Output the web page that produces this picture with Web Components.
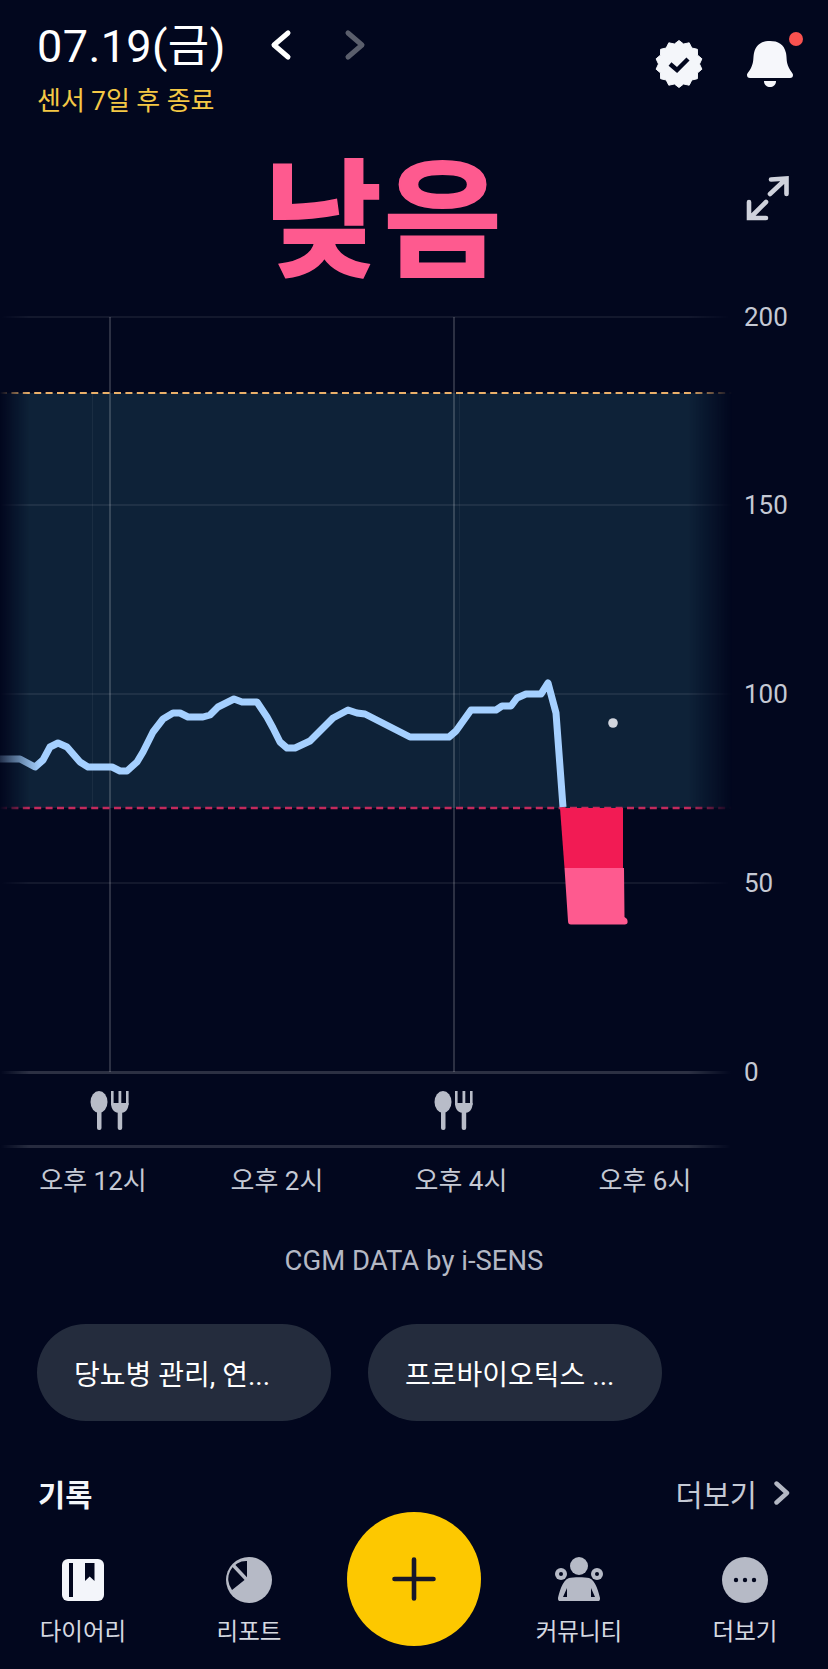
<!DOCTYPE html>
<html lang="ko">
<head>
<meta charset="utf-8">
<title>CGM</title>
<style>
  html, body { margin: 0; padding: 0; background: #02071e; }
  body { width: 828px; height: 1669px; overflow: hidden; font-family: Roboto, "Noto Sans CJK KR", sans-serif; color: #fff; }
</style>
</head>
<body>
<glucose-page>
  <glucose-header date="07.19(금)" note="센서 7일 후 종료"></glucose-header>
  <status-banner label="낮음"></status-banner>
  <glucose-chart></glucose-chart>
  <time-axis labels="오후 12시,오후 2시,오후 4시,오후 6시"></time-axis>
  <source-note>CGM DATA by i-SENS</source-note>
  <chip-row>
    <topic-chip>당뇨병 관리, 연...</topic-chip>
    <topic-chip>프로바이오틱스 ...</topic-chip>
  </chip-row>
  <record-head></record-head>
  <bottom-nav></bottom-nav>
</glucose-page>

<script>
class GlucosePage extends HTMLElement {
  constructor() {
    super();
    this.attachShadow({ mode: "open" });
    this.shadowRoot.innerHTML = `
      <style>:host { display: block; width: 828px; height: 1669px; }</style>
      <slot></slot>`;
  }
}

class GlucoseHeader extends HTMLElement {
  constructor() {
    super();
    this.attachShadow({ mode: "open" });
  }

  connectedCallback() {
    // badge outline has 14 little bumps
    let pts = [];
    for (let i = 0; i < 28; i++) {
      const r = i % 2 ? 20.5 : 23.5;
      const a = (Math.PI * i) / 14 - Math.PI / 2;
      pts.push((24 + r * Math.cos(a)).toFixed(1) + "," + (24 + r * Math.sin(a)).toFixed(1));
    }
    this.shadowRoot.innerHTML = `
      <style>
        :host { display: flex; justify-content: space-between; height: 138px; padding: 0 22px 0 37px; }
        .left { display: flex; flex-direction: column; }
        .top { display: flex; align-items: center; height: 80px; margin-top: 8px; }
        .date { font-size: 45px; line-height: 80px; width: 232px; color: #fff; margin-top: -2px; letter-spacing: 0.4px; }
        .nav { display: flex; gap: 50px; margin-top: -6px; }
        .note { font-size: 26px; line-height: 36px; margin-top: -5px; color: #f4c845; }
        .actions { display: flex; gap: 41px; padding-top: 40px; height: 48px; }
        svg { display: block; }
      </style>
      <div class="left">
        <div class="top">
          <span class="date">${this.getAttribute("date")}</span>
          <div class="nav">
            <svg width="24" height="32" viewBox="0 0 24 32"><path d="M19 4 L5 16 L19 28" fill="none" stroke="#fff" stroke-width="5" stroke-linecap="round" stroke-linejoin="round"/></svg>
            <svg width="24" height="32" viewBox="0 0 24 32"><path d="M5 4 L19 16 L5 28" fill="none" stroke="#5a5e6c" stroke-width="5" stroke-linecap="round" stroke-linejoin="round"/></svg>
          </div>
        </div>
        <div class="note">${this.getAttribute("note")}</div>
      </div>
      <div class="actions">
        <svg width="48" height="48" viewBox="0 0 48 48">
          <polygon points="${pts.join(" ")}" fill="#f4f6fa" stroke="#f4f6fa" stroke-width="1" stroke-linejoin="round"/>
          <path d="M15 24 L22 30 L33 19" fill="none" stroke="#02071e" stroke-width="4.4"/>
        </svg>
        <svg width="62" height="58" viewBox="0 0 62 58" style="margin-top:-8px">
          <path d="M3 43 C3 41 5 40 7 36 C10 30 9 26 10 21 C12 12 18 9 26 9 C34 9 40 12 42 21 C43 26 42 30 45 36 C47 40 49 41 49 43 C49 45 48 46 46 46 L6 46 C4 46 3 45 3 43 Z" fill="#f6f7fb"/>
          <path d="M20 49 L32 49 C32 53 29 55 26 55 C23 55 20 53 20 49 Z" fill="#f6f7fb"/>
          <circle cx="52" cy="7" r="7" fill="#f9524f"/>
        </svg>
      </div>`;
  }
}

class StatusBanner extends HTMLElement {
  constructor() {
    super();
    this.attachShadow({ mode: "open" });
  }

  connectedCallback() {
    this.shadowRoot.innerHTML = `
      <style>
        :host { display: flex; align-items: flex-start; justify-content: space-between; height: 172px; padding: 0 37px 0 264px; }
        .label { font-family: "Noto Sans CJK KR", sans-serif; font-size: 128px; font-weight: 700; -webkit-text-stroke: 2px #fe5a8f; line-height: 150px; letter-spacing: 2px; color: #fe5a8f; margin-top: -1px; }
        svg { display: block; margin-top: 37px; }
      </style>
      <span class="label">${this.getAttribute("label")}</span>
      <svg width="46" height="46" viewBox="0 0 46 46">
        <path d="M25 19 L41 4 M26 4.5 L41.5 3.5 L41.5 19 M6 42 L21 27 M4 27 L4 43 L21 43" fill="none" stroke="#cfd2dc" stroke-width="4.6" stroke-linecap="round" stroke-linejoin="miter"/>
      </svg>`;
  }
}

// the chart is a free canvas, coordinates below are in page pixels (host starts at y=310)
class GlucoseChart extends HTMLElement {
  constructor() {
    super();
    this.attachShadow({ mode: "open" });
  }

  connectedCallback() {
    const line = "0,759 20,759 35,767 43,760 50,747 58,743 67,747 80,762 88,767 112,767 120,771 127,771 137,762 143,752 153,732 163,719 173,713 180,713 188,717 203,717 210,715 218,707 234,699 242,702 257,702 267,717 273,728 280,742 287,748 295,748 310,741 333,718 348,710 357,713 365,714 410,737 449,737 456,731 471,710 496,710 502,706 511,706 517,698 526,694 541,694 548,683 552,698 556,713 563,807";
    const ticks = [[200, 317], [150, 505], [100, 694], [50, 883], [0, 1072]];
    const meal = `<g fill="#b8bcc8">
        <ellipse cx="99" cy="1102" rx="8.5" ry="11"/>
        <rect x="97" y="1108" width="4.5" height="22" rx="2"/>
        <rect x="111" y="1091" width="2.6" height="14"/><rect x="118.5" y="1091" width="2.8" height="16"/><rect x="126" y="1091" width="2.6" height="14"/>
        <path d="M111 1103 L128.6 1103 C128.6 1110 125 1113 120 1113 C115 1113 111 1110 111 1103 Z"/>
        <rect x="117.7" y="1110" width="4.5" height="20" rx="2"/>
      </g>`;
    this.shadowRoot.innerHTML = `
      <style>
        :host { display: block; height: 850px; }
        svg { display: block; overflow: visible; }
        text { font-family: Roboto, sans-serif; font-size: 26px; fill: #c5c9d4; }
      </style>
      <svg width="828" height="850" viewBox="0 310 828 850">
        <defs>
          <linearGradient id="fade" x1="0" y1="0" x2="732" y2="0" gradientUnits="userSpaceOnUse">
            <stop offset="0" stop-color="#fff" stop-opacity="0"/>
            <stop offset=".04" stop-color="#fff"/>
            <stop offset=".94" stop-color="#fff"/>
            <stop offset="1" stop-color="#fff" stop-opacity="0"/>
          </linearGradient>
          <mask id="edge" maskUnits="userSpaceOnUse" x="0" y="310" width="828" height="850">
            <rect x="0" y="310" width="732" height="850" fill="url(#fade)"/>
          </mask>
          <linearGradient id="lineFade" x1="0" y1="0" x2="40" y2="0" gradientUnits="userSpaceOnUse">
            <stop offset="0" stop-color="#a5d0ff" stop-opacity=".2"/>
            <stop offset="1" stop-color="#a5d0ff"/>
          </linearGradient>
        </defs>
        <g mask="url(#edge)">
          <rect x="0" y="393" width="732" height="415" fill="#0e2238"/>
          ${ticks.map((t) => `<rect x="0" y="${t[1] - 1}" width="732" height="${t[0] === 0 ? 3 : 2}" fill="#fff" fill-opacity="${t[0] === 0 ? 0.17 : 0.07}"/>`).join("")}
          <rect x="0" y="1145" width="732" height="3" fill="#fff" fill-opacity=".15"/>
          <rect x="92" y="393" width="1" height="415" fill="#fff" fill-opacity=".05"/>
          <rect x="459" y="393" width="1" height="415" fill="#fff" fill-opacity=".05"/>
          <rect x="109" y="317" width="2" height="755" fill="#fff" fill-opacity=".17"/>
          <rect x="453" y="317" width="2" height="755" fill="#fff" fill-opacity=".17"/>
          <line x1="0" y1="393" x2="732" y2="393" stroke="#eab06a" stroke-width="2" stroke-dasharray="7 4.4"/>
          <line x1="0" y1="808" x2="732" y2="808" stroke="#c22a5c" stroke-width="2.4" stroke-dasharray="7 4.4"/>
        </g>
        <path d="M560 808 L623 808 L623 868 L564.5 868 Z" fill="#f21b54"/>
        <path d="M564.5 868 L624 868 L624.5 917 L627 919 Q629 924 625 924.5 L571 924.5 Q568 924.5 568 921 Z" fill="#fe5a8f"/>
        <polyline points="${line}" fill="none" stroke="url(#lineFade)" stroke-width="7" stroke-linejoin="round" stroke-linecap="butt"/>
        <circle cx="613" cy="723" r="4.8" fill="#d2d6de"/>
        ${ticks.map((t) => `<text x="744" y="${t[1] + 9}">${t[0]}</text>`).join("")}
        ${meal}
        <g transform="translate(344 0)">${meal}</g>
      </svg>`;
  }
}

class TimeAxis extends HTMLElement {
  constructor() {
    super();
    this.attachShadow({ mode: "open" });
  }

  connectedCallback() {
    const labels = this.getAttribute("labels").split(",");
    this.shadowRoot.innerHTML = `
      <style>
        :host { display: grid; grid-template-columns: repeat(4, 184px); padding: 3px 0 0 1px; height: 57px; }
        span { text-align: center; font-size: 26px; line-height: 36px; color: #c5c9d4; }
      </style>
      ${labels.map((l) => `<span>${l}</span>`).join("")}`;
  }
}

class SourceNote extends HTMLElement {
  constructor() {
    super();
    this.attachShadow({ mode: "open" });
    this.shadowRoot.innerHTML = `
      <style>
        :host { display: block; height: 104px; padding-top: 22px; box-sizing: border-box; text-align: center; font-size: 27.5px; line-height: 38px; color: #b4b8c4; }
      </style>
      <slot></slot>`;
  }
}

class ChipRow extends HTMLElement {
  constructor() {
    super();
    this.attachShadow({ mode: "open" });
    this.shadowRoot.innerHTML = `
      <style>:host { display: flex; gap: 37px; padding: 0 37px; height: 97px; }</style>
      <slot></slot>`;
  }
}

class TopicChip extends HTMLElement {
  constructor() {
    super();
    this.attachShadow({ mode: "open" });
    this.shadowRoot.innerHTML = `
      <style>
        :host { display: flex; align-items: center; box-sizing: border-box; width: 294px; height: 97px; padding: 0 37px; border-radius: 49px; background: #242c3d; font-size: 28px; color: #fff; white-space: nowrap; }
      </style>
      <slot></slot>`;
  }
}

class RecordHead extends HTMLElement {
  constructor() {
    super();
    this.attachShadow({ mode: "open" });
    this.shadowRoot.innerHTML = `
      <style>
        :host { display: flex; justify-content: space-between; align-items: center; height: 40px; margin-top: 52px; padding: 0 38px; font-size: 29.5px; }
        b { font-weight: 700; color: #f4f6fa; }
        .more { display: flex; align-items: center; gap: 17px; color: #c5c9d4; }
        svg { display: block; }
      </style>
      <b>기록</b>
      <span class="more">더보기
        <svg width="16" height="24" viewBox="0 0 16 24"><path d="M2.5 2.5 L13 12 L2.5 21.5" fill="none" stroke="#b4b8c4" stroke-width="4.4" stroke-linejoin="round" stroke-linecap="round"/></svg>
      </span>`;
  }
}

class NavItem extends HTMLElement {
  constructor() {
    super();
    this.attachShadow({ mode: "open" });
    this.shadowRoot.innerHTML = `
      <style>
        :host { display: flex; flex-direction: column; align-items: center; width: 166px; padding-top: 44px; box-sizing: border-box; color: #d6d9e1; font-size: 23.5px; }
        .label { line-height: 36px; margin-top: 10px; }
      </style>
      <slot name="icon"></slot>
      <span class="label"><slot></slot></span>`;
  }
}

class BottomNav extends HTMLElement {
  constructor() {
    super();
    this.attachShadow({ mode: "open" });
    this.shadowRoot.innerHTML = `
      <style>
        :host { display: flex; justify-content: center; align-items: flex-start; height: 157px; margin-top: -1px; }
        svg { display: block; }
        .fab { width: 134px; height: 134px; border-radius: 50%; background: #fdc800; display: flex; align-items: center; justify-content: center; margin: 0 15px; flex: none; }
      </style>
      <nav-item>
        <svg slot="icon" width="48" height="48" viewBox="0 0 48 48">
          <rect x="3" y="3" width="42" height="42" rx="6" fill="#f3f5fa"/>
          <rect x="10" y="7" width="4" height="34" fill="#02071e"/>
          <path d="M26 7 L35.5 7 L35.5 25 L30.7 20.5 L26 25 Z" fill="#02071e"/>
        </svg>
        다이어리
      </nav-item>
      <nav-item>
        <svg slot="icon" width="48" height="48" viewBox="0 0 48 48">
          <circle cx="24" cy="24" r="23" fill="#b6bac6"/>
          <path d="M22 22 L22 5 A 18 18 0 0 0 7 34 Z" fill="#02071e"/>
          <path d="M8 9 L23 25" stroke="#b6bac6" stroke-width="3.5"/>
        </svg>
        리포트
      </nav-item>
      <div class="fab">
        <svg width="48" height="48" viewBox="0 0 48 48"><path d="M24 4.5 L24 43.5 M4.5 24 L43.5 24" stroke="#17172a" stroke-width="4.6" stroke-linecap="round"/></svg>
      </div>
      <nav-item>
        <svg slot="icon" width="48" height="48" viewBox="0 0 48 48">
          <circle cx="24" cy="10" r="9" fill="#b6bac6"/>
          <circle cx="6" cy="18" r="6" fill="#b6bac6"/><circle cx="6" cy="18" r="2" fill="#02071e"/>
          <circle cx="42" cy="18" r="6" fill="#b6bac6"/><circle cx="42" cy="18" r="2" fill="#02071e"/>
          <path d="M14 22 C18 21 30 21 34 22 C41 24 44 38 45 42 C45 45 44 45 43 45 L5 45 C4 45 3 45 3 42 C4 38 7 24 14 22 Z" fill="#b6bac6"/>
          <path d="M12 32 L8 41 L12 41 Z M36 32 L40 41 L36 41 Z" fill="#02071e"/>
        </svg>
        커뮤니티
      </nav-item>
      <nav-item>
        <svg slot="icon" width="48" height="48" viewBox="0 0 48 48">
          <circle cx="24" cy="24" r="23" fill="#b6bac6"/>
          <circle cx="15" cy="24" r="2.2" fill="#02071e"/><circle cx="24" cy="24" r="2.2" fill="#02071e"/><circle cx="33" cy="24" r="2.2" fill="#02071e"/>
        </svg>
        더보기
      </nav-item>`;
  }
}

customElements.define("glucose-page", GlucosePage);
customElements.define("glucose-header", GlucoseHeader);
customElements.define("status-banner", StatusBanner);
customElements.define("glucose-chart", GlucoseChart);
customElements.define("time-axis", TimeAxis);
customElements.define("source-note", SourceNote);
customElements.define("chip-row", ChipRow);
customElements.define("topic-chip", TopicChip);
customElements.define("record-head", RecordHead);
customElements.define("nav-item", NavItem);
customElements.define("bottom-nav", BottomNav);
</script>
</body>
</html>
